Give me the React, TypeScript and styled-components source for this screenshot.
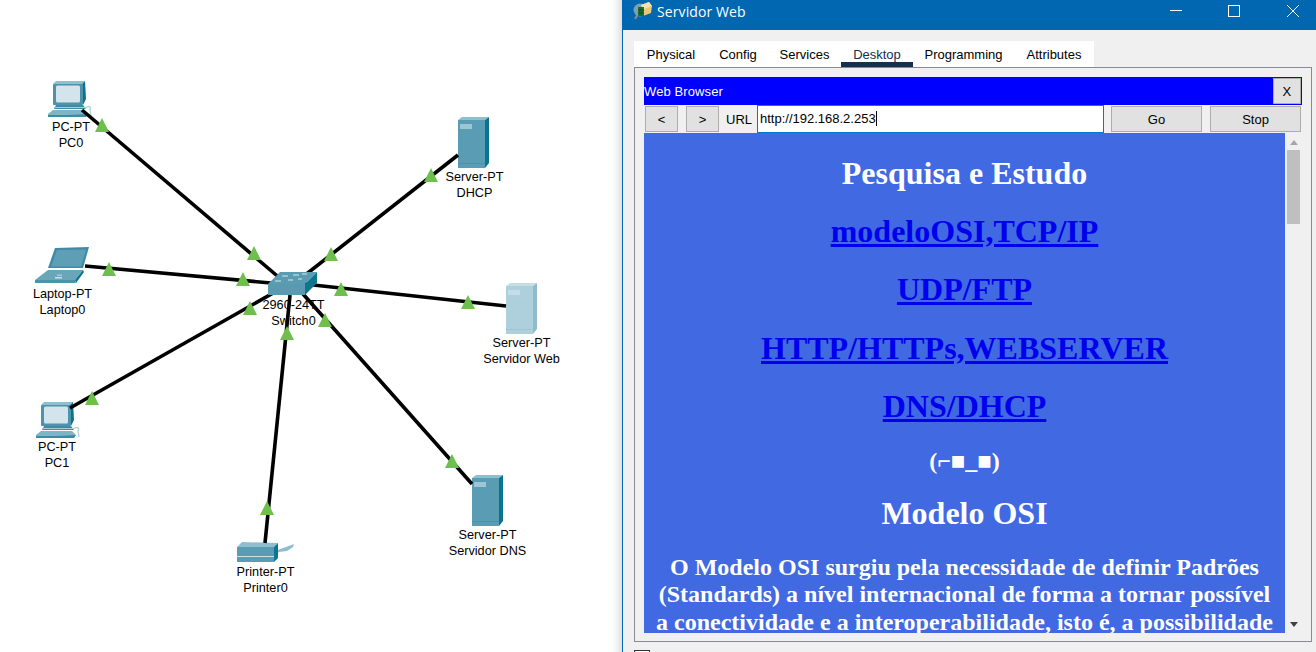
import React from "react";
import styled, { createGlobalStyle } from "styled-components";

const Global = createGlobalStyle`
  html, body { margin: 0; padding: 0; background: #fff; overflow: hidden; }
  #root { width: 1316px; height: 652px; }
`;

const Page = styled.div`
  display: flex;
  width: 1316px;
  height: 652px;
  overflow: hidden;
  background: #fff;
  font-family: "Liberation Sans", Arial, sans-serif;
`;

const Canvas = styled.div`
  position: relative;
  flex: 0 0 622px;
  height: 652px;
  background: linear-gradient(to right, #fff 611px, #f6f6f6 616px, #e0e0e0 622px);
`;

const LinkLayer = styled.svg`
  position: absolute;
  left: 0;
  top: 0;
`;

const Node = styled.div.attrs<{ $x: number; $y: number }>((p) => ({
  style: { left: p.$x, top: p.$y },
}))<{ $x: number; $y: number }>`
  position: absolute;
  width: 120px;
  margin-left: -60px;
  display: flex;
  flex-direction: column;
  align-items: center;
  color: #000;
  font-size: 12.7px;
  line-height: 15.5px;
`;

const NodeIcon = styled.svg.attrs<{ $x: number; $y: number }>((p) => ({
  style: { left: p.$x, top: p.$y },
}))<{ $x: number; $y: number }>`
  position: absolute;
  overflow: visible;
`;

const Window = styled.div`
  flex: 1;
  height: 652px;
  overflow: hidden;
  display: flex;
  flex-direction: column;
  background: #f0f0f0;
  border-left: 1px solid #0067b0;
`;

const TitleBar = styled.div`
  flex: 0 0 30px;
  display: flex;
  align-items: center;
  background: #0067b0;
  color: #fff;
  font-family: "Open Sans", "Noto Sans", sans-serif;
  font-size: 14px;
  padding-left: 10px;
`;

const TitleText = styled.span`
  margin-left: 5px;
  margin-top: -7px;
  flex: 1;
  letter-spacing: 0.1px;
`;

const Controls = styled.div`
  display: flex;
  gap: 46px;
  padding-right: 17px;
  margin-top: -8px;
  svg:last-child {
    margin-left: 1px;
  }
`;

const Body = styled.div`
  flex: none;
  height: 622px;
  box-sizing: border-box;
  display: flex;
  flex-direction: column;
  padding: 11px 4px 0 11px;
`;

const Tabs = styled.div`
  display: flex;
  flex: none;
  align-self: flex-start;
  height: 26px;
  background: #fff;
`;

const Tab = styled.div<{ $w: number; $active?: boolean }>`
  width: ${(p) => p.$w}px;
  height: 26px;
  text-align: center;
  font-size: 13px;
  line-height: 27px;
  color: ${(p) => (p.$active ? "#14304f" : "#000")};
  box-shadow: ${(p) => (p.$active ? "inset 0 -5px 0 #14304f" : "none")};
`;

const Panel = styled.div`
  flex: none;
  height: 575px;
  overflow: hidden;
  box-sizing: border-box;
  border: 1px solid #888c90;
  padding: 9px;
  display: flex;
  flex-direction: column;
`;

const Footer = styled.div`
  flex: none;
  margin-top: 8px;
  width: 14px;
  height: 14px;
  border: 1px solid #333;
  background: #fff;
`;

const BrowserBar = styled.div`
  flex: none;
  height: 28px;
  box-sizing: border-box;
  display: flex;
  align-items: center;
  justify-content: space-between;
  background: #0000ff;
  color: #fff;
  font-size: 13px;
  padding-right: 1px;
  letter-spacing: 0.1px;
`;

const Button = styled.div<{ $w: number; $gap?: number }>`
  box-sizing: border-box;
  width: ${(p) => p.$w}px;
  margin-left: ${(p) => p.$gap ?? 0}px;
  height: 26px;
  flex: 0 0 auto;
  display: flex;
  align-items: center;
  justify-content: center;
  background: #e1e1e1;
  border: 1px solid #adadad;
  color: #000;
  font-size: 13px;
`;

const UrlRow = styled.div`
  flex: none;
  height: 28px;
  display: flex;
  align-items: center;
  padding: 0 1px;
`;

const UrlLabel = styled.span`
  flex: none;
  width: 25px;
  font-size: 13px;
  margin: 0 6px 0 7px;
`;

const UrlInput = styled.div`
  box-sizing: border-box;
  flex: none;
  width: 347px;
  height: 28px;
  display: flex;
  align-items: center;
  padding-left: 2px;
  padding-bottom: 1px;
  background: #fff;
  border: 1px solid #0078d7;
  font-size: 13px;
`;

const Caret = styled.span`
  display: inline-block;
  width: 1px;
  height: 15px;
  background: #000;
`;

const Content = styled.div`
  flex: none;
  height: 500px;
  overflow: hidden;
  display: flex;
`;

const WebPage = styled.div`
  flex: 1;
  overflow: hidden;
  background: #4169e1;
  color: #fff;
  text-align: center;
  font-family: "Liberation Serif", "Times New Roman", serif;
  padding: 0.5px 8px 0;
`;

const Heading = styled.h1`
  font-size: 32px;
  line-height: 37px;
  margin: 21.33px 0;
`;

const Sub = styled.h2`
  font-size: 24px;
  line-height: 27.5px;
  margin: 22.7px 0 -1.2px;
`;

const Paragraph = styled(Sub)`
  margin-top: 0;
  line-height: 27.5px;
`;

const PageLink = styled.a`
  color: #0000ee;
  text-decoration: underline;
`;

const Scroll = styled.div`
  flex: 0 0 17px;
  position: relative;
  display: flex;
  flex-direction: column;
  align-items: center;
`;

const ScrollThumb = styled.div`
  width: 13px;
  height: 74px;
  margin-top: 5px;
  background: #bfbfbf;
`;

const ArrowUp = styled.div`
  margin-top: 7px;
  width: 0;
  height: 0;
  border: 4px solid transparent;
  border-top: 0;
  border-bottom: 5px solid #a6a6a6;
`;

const ArrowDown = styled.div`
  position: absolute;
  bottom: 6px;
  width: 0;
  height: 0;
  border: 4px solid transparent;
  border-bottom: 0;
  border-top: 5px solid #404040;
`;

const ServerIcon = ({ x, y, light }: { x: number; y: number; light?: boolean }) => {
  const c = light
    ? { f: "#aed0dc", s: "#8fbccb", t: "#c6dfe7", h: "#c5dde6", b: "#a0c5d2" }
    : { f: "#5a9cb3", s: "#0a7390", t: "#8fbfce", h: "#9cc6d4", b: "#4f90a8" };
  return (
    <NodeIcon $x={x} $y={y} width={31} height={51} viewBox="0 0 31 51">
      <polygon points="0,3 4,0 31,0 27,3" fill={c.t} />
      <polygon points="27,3 31,0 31,46 27,51" fill={c.s} />
      <rect x="0" y="3" width="27" height="48" fill={c.f} />
      <rect x="0" y="46" width="27" height="1" fill={c.b} />
      <rect x="2" y="7" width="12" height="5" fill={c.h} />
    </NodeIcon>
  );
};

const PcIcon = ({ x, y }: { x: number; y: number }) => (
  <NodeIcon $x={x} $y={y} width={44} height={36} viewBox="0 0 44 36">
    <polygon points="5,3 8,0 37,0 34,3" fill="#8fc0d0" />
    <polygon points="34,3 37,0 38,18 35,24" fill="#0a7390" />
    <rect x="5" y="3" width="30" height="21" rx="1" fill="#4f93aa" />
    <rect x="8" y="4.5" width="24" height="17" rx="1.5" fill="#d3e4ec" />
    <polygon points="8,24 35,24 38,28 6,28" fill="#3f8ba5" />
    <rect x="6" y="26" width="31" height="1" fill="#a8cdd9" />
    <polygon points="5,29 36,29 40,33 0,34 0,33" fill="#7eb4c6" />
    <polygon points="0,34 40,33 38,36 0,36" fill="#3c8aa3" />
    <path d="M37 27 C 41 24, 44 26, 42 29 L 43 35" fill="none" stroke="#b7d3dd" strokeWidth="1.4" />
  </NodeIcon>
);

const LaptopIcon = ({ x, y }: { x: number; y: number }) => (
  <NodeIcon $x={x} $y={y} width={54} height={37} viewBox="0 0 54 37">
    <polygon points="20,1 54,0 48,21 13,21" fill="#3f8ba5" />
    <polygon points="22,3 51,2.5 46,19.5 16,19.5" fill="#5f9fb6" />
    <polygon points="13,23 48,23 40,33 0,33" fill="#6aa6ba" />
    <polygon points="48,23 49,25 41,36 40,33" fill="#0a7390" />
    <polygon points="0,33 40,33 41,36 0,36" fill="#4a93ab" />
    <rect x="20" y="30" width="7" height="1.5" fill="#cde0e7" />
    <rect x="22" y="27.5" width="5" height="1.5" fill="#a5cbd8" />
  </NodeIcon>
);

const SwitchIcon = ({ x, y }: { x: number; y: number }) => (
  <NodeIcon $x={x} $y={y} width={49} height={23} viewBox="0 0 49 23">
    <polygon points="0,12 12,0 49,0 37,12" fill="#5c9cb3" />
    <polygon points="37,12 49,0 49,11 37,23" fill="#0d7590" />
    <rect x="0" y="12" width="37" height="11" fill="#5a9ab0" />
    <path d="M14 4 h6 M25 3 h6 M34 2 h5 M7 9 h6 M20 8 h5 M30 7 h4" stroke="#d6e7ed" strokeWidth="1.2" />
  </NodeIcon>
);

const PrinterIcon = ({ x, y }: { x: number; y: number }) => (
  <NodeIcon $x={x} $y={y} width={57} height={20} viewBox="0 0 57 20">
    <polygon points="38,9 57,2 56,5 50,9 42,10 38,13" fill="#8fbdcd" />
    <polygon points="0,5 5,0 41,1 37,5" fill="#8fbfce" />
    <polygon points="37,5 41,1 41,16 37,20" fill="#0d7590" />
    <rect x="0" y="5" width="37" height="15" fill="#5a9cb3" />
    <rect x="0" y="14" width="37" height="1" fill="#d0e2e8" />
  </NodeIcon>
);

const links = [
  [82, 110, 282, 280],
  [85, 266, 282, 284],
  [70, 408, 282, 288],
  [265, 543, 290, 295],
  [472, 484, 295, 285],
  [506, 306, 295, 283],
  [458, 155, 295, 283],
];

const triangles = [
  [102, 118], [254, 246], [109, 262], [243, 272], [92, 391], [250, 301],
  [267, 501], [287, 326], [452, 454], [325, 313], [468, 295], [341, 282],
  [431, 168], [331, 247],
];

const labels = [
  { x: 71, y: 120, a: "PC-PT", b: "PC0" },
  { x: 62.5, y: 287, a: "Laptop-PT", b: "Laptop0" },
  { x: 57, y: 440, a: "PC-PT", b: "PC1" },
  { x: 474.5, y: 170, a: "Server-PT", b: "DHCP" },
  { x: 521.5, y: 336, a: "Server-PT", b: "Servidor Web" },
  { x: 265.5, y: 565, a: "Printer-PT", b: "Printer0" },
  { x: 487.5, y: 528, a: "Server-PT", b: "Servidor DNS" },
];

const Diagram = () => (
  <Canvas>
    <ServerIcon x={458} y={117} />
    <ServerIcon x={506} y={283} light />
    <ServerIcon x={472} y={475} />
    <PcIcon x={48} y={81} />
    <PcIcon x={36} y={402} />
    <LaptopIcon x={35} y={247} />
    <PrinterIcon x={237} y={542} />
    <LinkLayer width={622} height={652}>
      {links.map(([a, b, c, d], i) => (
        <line key={i} x1={a} y1={b} x2={c} y2={d} stroke="#000" strokeWidth="3.6" />
      ))}
      {triangles.map(([x, y], i) => (
        <polygon key={i} points={`${x},${y} ${x + 7},${y + 14} ${x - 7},${y + 14}`} fill="#6fbf4f" />
      ))}
    </LinkLayer>
    <SwitchIcon x={268} y={272} />
    {labels.map((n) => (
      <Node key={n.b} $x={n.x} $y={n.y}>
        <span>{n.a}</span>
        <span>{n.b}</span>
      </Node>
    ))}
    <Node $x={293.5} $y={298}>
      <span>2960-24TT</span>
      <span>Switch0</span>
    </Node>
  </Canvas>
);

const AppIconSvg = styled.svg`
  margin-top: -8px;
  flex: none;
`;

const AppIcon = () => (
  <AppIconSvg width="19" height="18" viewBox="0 0 19 18">
    <path d="M5 12 L2 17" stroke="#8a8a8a" strokeWidth="2.2" />
    <circle cx="7" cy="8" r="6.5" fill="#7f9fb0" />
    <polygon points="8,3 16,0 19,4 18,11 10,14" fill="#e6c878" />
    <polygon points="8,3 16,0 19,4 11,7" fill="#f5e2a8" />
    <rect x="5" y="5" width="6" height="9" fill="#1d7a3c" />
    <path d="M7 5 v9 M9 5 v9 M5 8 h6 M5 11 h6" stroke="#0f3d1e" strokeWidth="0.6" />
  </AppIconSvg>
);

export default function App() {
  return (
    <Page>
      <Global />
      <Diagram />
      <Window>
        <TitleBar>
          <AppIcon />
          <TitleText>Servidor Web</TitleText>
          <Controls>
            <svg width="12" height="12" viewBox="0 0 12 12">
              <path d="M0 5.5 H12" stroke="#fff" />
            </svg>
            <svg width="12" height="12" viewBox="0 0 12 12">
              <rect x="0.5" y="0.5" width="11" height="11" fill="none" stroke="#fff" />
            </svg>
            <svg width="12" height="12" viewBox="0 0 12 12">
              <path d="M0 0 L12 12 M12 0 L0 12" stroke="#fff" />
            </svg>
          </Controls>
        </TitleBar>
        <Body>
          <Tabs>
            <Tab $w={74}>Physical</Tab>
            <Tab $w={60}>Config</Tab>
            <Tab $w={73}>Services</Tab>
            <Tab $w={72} $active>Desktop</Tab>
            <Tab $w={101}>Programming</Tab>
            <Tab $w={80}>Attributes</Tab>
          </Tabs>
          <Panel>
            <BrowserBar>
              <span>Web Browser</span>
              <Button $w={28}>X</Button>
            </BrowserBar>
            <UrlRow>
              <Button $w={33}>&lt;</Button>
              <Button $w={33} $gap={8}>&gt;</Button>
              <UrlLabel>URL</UrlLabel>
              <UrlInput>
                http://192.168.2.253
                <Caret />
              </UrlInput>
              <Button $w={91} $gap={7}>Go</Button>
              <Button $w={91} $gap={8}>Stop</Button>
            </UrlRow>
            <Content>
              <WebPage>
                <Heading>Pesquisa e Estudo</Heading>
                <Heading><PageLink>modeloOSI,TCP/IP</PageLink></Heading>
                <Heading><PageLink>UDP/FTP</PageLink></Heading>
                <Heading><PageLink>HTTP/HTTPs,WEBSERVER</PageLink></Heading>
                <Heading><PageLink>DNS/DHCP</PageLink></Heading>
                <Sub>(⌐■_■)</Sub>
                <Heading>Modelo OSI</Heading>
                <Paragraph>
                  O Modelo OSI surgiu pela necessidade de definir Padrões (Standards) a nível
                  internacional de forma a tornar possível a conectividade e a interoperabilidade,
                  isto é, a possibilidade
                </Paragraph>
              </WebPage>
              <Scroll>
                <ArrowUp />
                <ScrollThumb />
                <ArrowDown />
              </Scroll>
            </Content>
          </Panel>
          <Footer />
        </Body>
      </Window>
    </Page>
  );
}
